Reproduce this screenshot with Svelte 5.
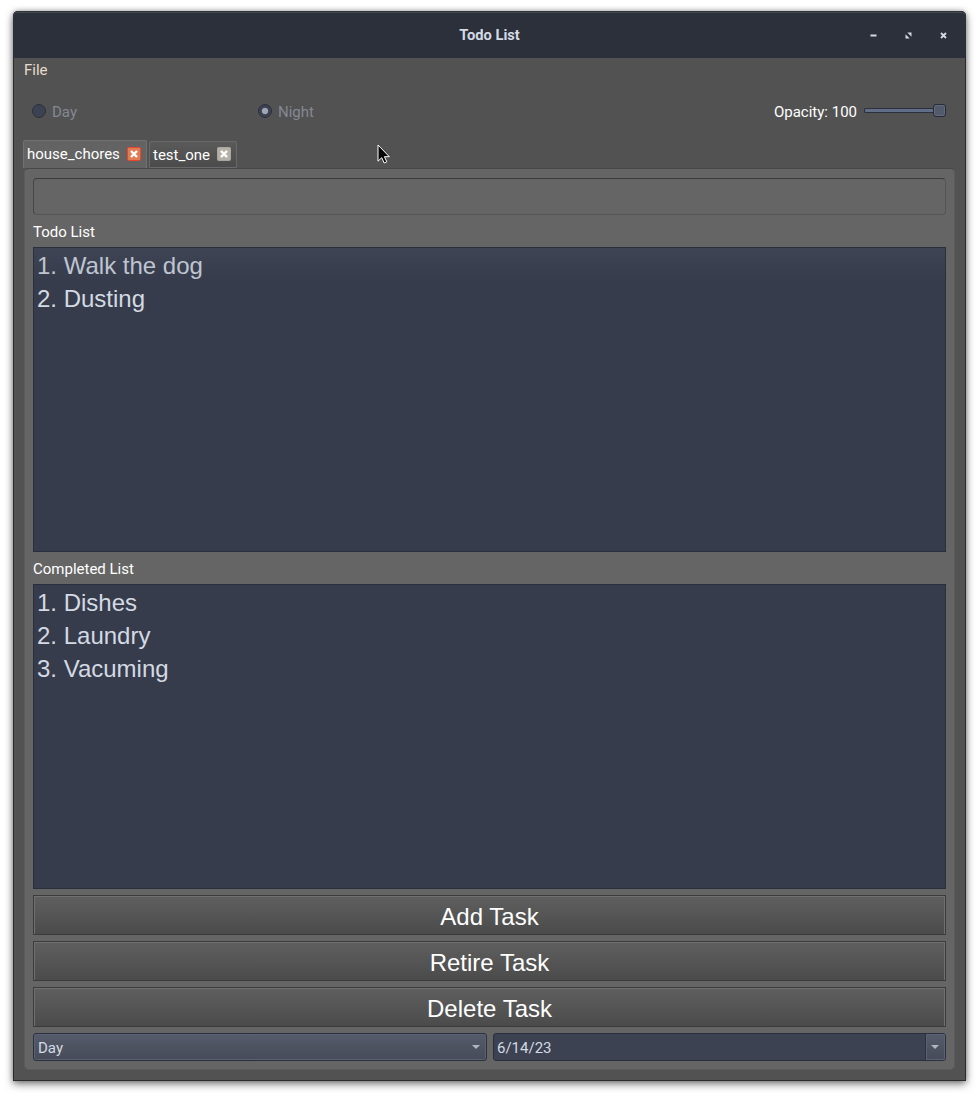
<script>
  const tabs = [
    { name: 'house_chores', active: true },
    { name: 'test_one', active: false },
  ];
  const todo = ['Walk the dog', 'Dusting'];
  const done = ['Dishes', 'Laundry', 'Vacuming'];
  const actions = ['Add Task', 'Retire Task', 'Delete Task'];
</script>

<main>
  <div class="window">
    <header>
      <h1>Todo List</h1>
      <div class="controls">
        <svg width="7" height="7" viewBox="0 0 7 7"><path d="M.5 2.5h6v2h-6z" fill="#d3dae3" /></svg>
        <svg width="7" height="7" viewBox="0 0 7 7"><path d="M2.3 .5H6.5V4.7zM.5 2.3V6.5H4.7z" fill="#d3dae3" /></svg>
        <svg width="7" height="7" viewBox="0 0 7 7"><path d="M1 1l5 5M6 1l-5 5" stroke="#d3dae3" stroke-width="1.8" /></svg>
      </div>
    </header>

    <nav>File</nav>

    <div class="options">
      <div class="radio"><i></i><span>Day</span></div>
      <div class="radio on"><i></i><span>Night</span></div>
      <div class="opacity">
        <span>Opacity: 100</span>
        <div class="slider"><div class="track"></div><div class="handle"></div></div>
      </div>
    </div>

    <div class="tabs">
      {#each tabs as tab}
        <div class="tab" class:active={tab.active}>
          <span>{tab.name}</span>
          <svg width="14" height="14" viewBox="0 0 14 14">
            <rect x=".5" y=".5" width="13" height="13" rx="1" fill={tab.active ? '#e07b52' : '#b5b1a9'} stroke={tab.active ? '#e8432c' : '#aaa69e'} />
            <path d="M4 4l6 6M10 4l-6 6" stroke="#fff" stroke-width="2.4" />
          </svg>
        </div>
      {/each}
    </div>

    <section class="pane">
      <div class="entry"></div>
      <h2>Todo List</h2>
      <div class="list first">
        {#each todo as item, i}<div class="item">{i + 1}. {item}</div>{/each}
      </div>
      <h2>Completed List</h2>
      <div class="list">
        {#each done as item, i}<div class="item">{i + 1}. {item}</div>{/each}
      </div>
      {#each actions as label}<button>{label}</button>{/each}
      <div class="bottom">
        <div class="combo">
          <span>Day</span>
          <svg width="8" height="4" viewBox="0 0 8 4"><path d="M0 0h8L4 4z" fill="#b0b5c1" /></svg>
        </div>
        <div class="date">
          <span>6/14/23</span>
          <div class="drop"><svg width="8" height="4" viewBox="0 0 8 4"><path d="M0 0h8L4 4z" fill="#b0b5c1" /></svg></div>
        </div>
      </div>
    </section>
  </div>

  <svg class="cursor" width="14" height="20" viewBox="0 0 14 20">
    <path d="M1 1V17.2L4.7 13.7L7.2 19L9.8 17.8L7.4 12.7H12.3z" fill="#050505" stroke="#fff" stroke-width="1" />
  </svg>
</main>

<style>
  :global(body) { background: #fff; }
  main {
    position: relative;
    box-sizing: border-box;
    height: 1097px;
    padding: 11px 13px 16px;
    font: 15px/20px Roboto, sans-serif;
    color: #fff;
    overflow: hidden;
  }
  main * { box-sizing: border-box; }
  svg { display: block; }
  .window {
    height: 1070px;
    display: flex;
    flex-direction: column;
    background: #525252;
    border: 1px solid #2b2b2b;
    border-top: 0;
    border-radius: 5px 5px 0 0;
    box-shadow: 0 3px 8px rgba(0, 0, 0, .5), 0 0 5px rgba(0, 0, 0, .25);
  }
  header {
    height: 47px;
    flex: none;
    margin: 0 -1px;
    display: grid;
    grid-template-columns: 1fr auto 1fr;
    align-items: center;
    background: #2b303b;
    border-top: 1px solid #2f343b;
    border-radius: 5px 5px 0 0;
    box-shadow: inset 0 1px #454a50;
  }
  h1 {
    grid-column: 2;
    margin: 0 0 1px;
    font-size: 14.67px;
    font-weight: 700;
    line-height: 20px;
    color: #d3dae3;
  }
  .controls {
    display: flex;
    justify-content: flex-end;
    gap: 28px;
    padding-right: 19.5px;
  }
  nav { height: 24px; padding: 2px 0 0 10px; color: #e5dccb; }
  .options {
    height: 58px;
    padding: 0 19px 1px 18px;
    display: grid;
    grid-template-columns: 226px 1fr auto;
    align-items: center;
  }
  .radio { display: flex; align-items: center; gap: 6px; color: #848893; }
  .radio span, .opacity span { position: relative; top: 1px; }
  .radio i {
    width: 14px;
    height: 14px;
    border: 1px solid #2b303b;
    border-radius: 50%;
    background: #3c4252;
  }
  .radio.on i { background: radial-gradient(circle, #9fa5b1 0 2.8px, #3c4252 3.6px); }
  .opacity { display: flex; align-items: center; gap: 7px; }
  .slider { width: 82px; height: 14px; display: flex; align-items: center; }
  .track {
    flex: 1;
    height: 5px;
    border: 1px solid #2b303f;
    border-right: 0;
    border-radius: 2px 0 0 2px;
    background: #626e88;
  }
  .handle {
    width: 13px;
    height: 13px;
    border: 1px solid #262b38;
    border-radius: 3px;
    background: #535a6b;
    box-shadow: inset 0 0 0 1px #646b7d;
  }
  .tabs { height: 28px; padding-left: 9px; display: flex; align-items: flex-end; gap: 2px; }
  .tab {
    width: 88px;
    height: 27px;
    padding: 0 5px 0 3px;
    display: flex;
    align-items: center;
    justify-content: space-between;
    border: 1px solid #696969;
    background: linear-gradient(#5a5a5a, #4b4b4b);
    border-radius: 2px 2px 0 0;
  }
  .tab svg { position: relative; top: -.5px; }
  .tab.active {
    width: 124px;
    height: 28px;
    padding-bottom: 1px;
    border-color: #717171;
    border-bottom: 0;
    background: #636363;
  }
  .tab.active svg { top: 0; }
  .pane {
    flex: 1;
    min-height: 0;
    margin: 0 10px 10px;
    padding: 9px 8px 8px;
    display: flex;
    flex-direction: column;
    background: #656565;
    border: 1px solid #5c5c5c;
    border-top-color: #484848;
    border-radius: 5px;
  }
  .entry {
    height: 37px;
    flex: none;
    border: 1px solid #555;
    border-top-color: #3b3b3b;
    border-left-color: #454545;
    border-radius: 4px;
  }
  h2 { margin: 0; height: 32px; flex: none; padding-top: 7px; font-size: 15px; font-weight: 400; line-height: 20px; }
  .list {
    height: 305px;
    flex: none;
    padding: 1px 3px;
    background: #373c4c;
    border: 1px solid #2b2e3b;
    color: #d3dae3;
    font: 24px/33px "Liberation Sans", Arial, sans-serif;
  }
  .list.first { background: linear-gradient(#3e4454, #373c4c 33px); }
  .list.first .item:first-child { color: #bfc5d0; }
  button {
    height: 40px;
    flex: none;
    margin: 6px 0 0;
    padding: 3px 0 0;
    border: 1px solid #3b3b3b;
    border-radius: 0;
    background: linear-gradient(#5f5f5f, #4b4b4b);
    box-shadow: inset 1px 0 #707070, inset -1px 0 #707070, inset 0 1px #707070;
    color: #fff;
    font: 24px/32px "Liberation Sans", Arial, sans-serif;
  }
  .bottom { margin-top: 6px; height: 28px; flex: none; display: flex; gap: 6px; color: #d3dae3; }
  .combo, .date {
    display: flex;
    align-items: center;
    justify-content: space-between;
    border: 1px solid #2b303f;
    border-radius: 3px;
  }
  .bottom span { padding: 1px 0 0 4px; }
  .bottom .date span { padding-left: 3px; }
  .combo {
    width: 454px;
    padding-right: 6px;
    background: linear-gradient(#555b6b, #474b59);
    box-shadow: inset 0 0 0 1px #5b6274;
  }
  .date { flex: 1; background: #3c4252; }
  .drop {
    width: 20px;
    height: 26px;
    padding-right: 2px;
    display: grid;
    place-items: center;
    border-left: 1px solid #2b303f;
    border-radius: 0 2px 2px 0;
    background: linear-gradient(#555b6b, #474b59);
    box-shadow: inset 0 0 0 1px #5b6274;
  }
  .cursor { position: absolute; left: 377px; top: 144px; }
</style>
